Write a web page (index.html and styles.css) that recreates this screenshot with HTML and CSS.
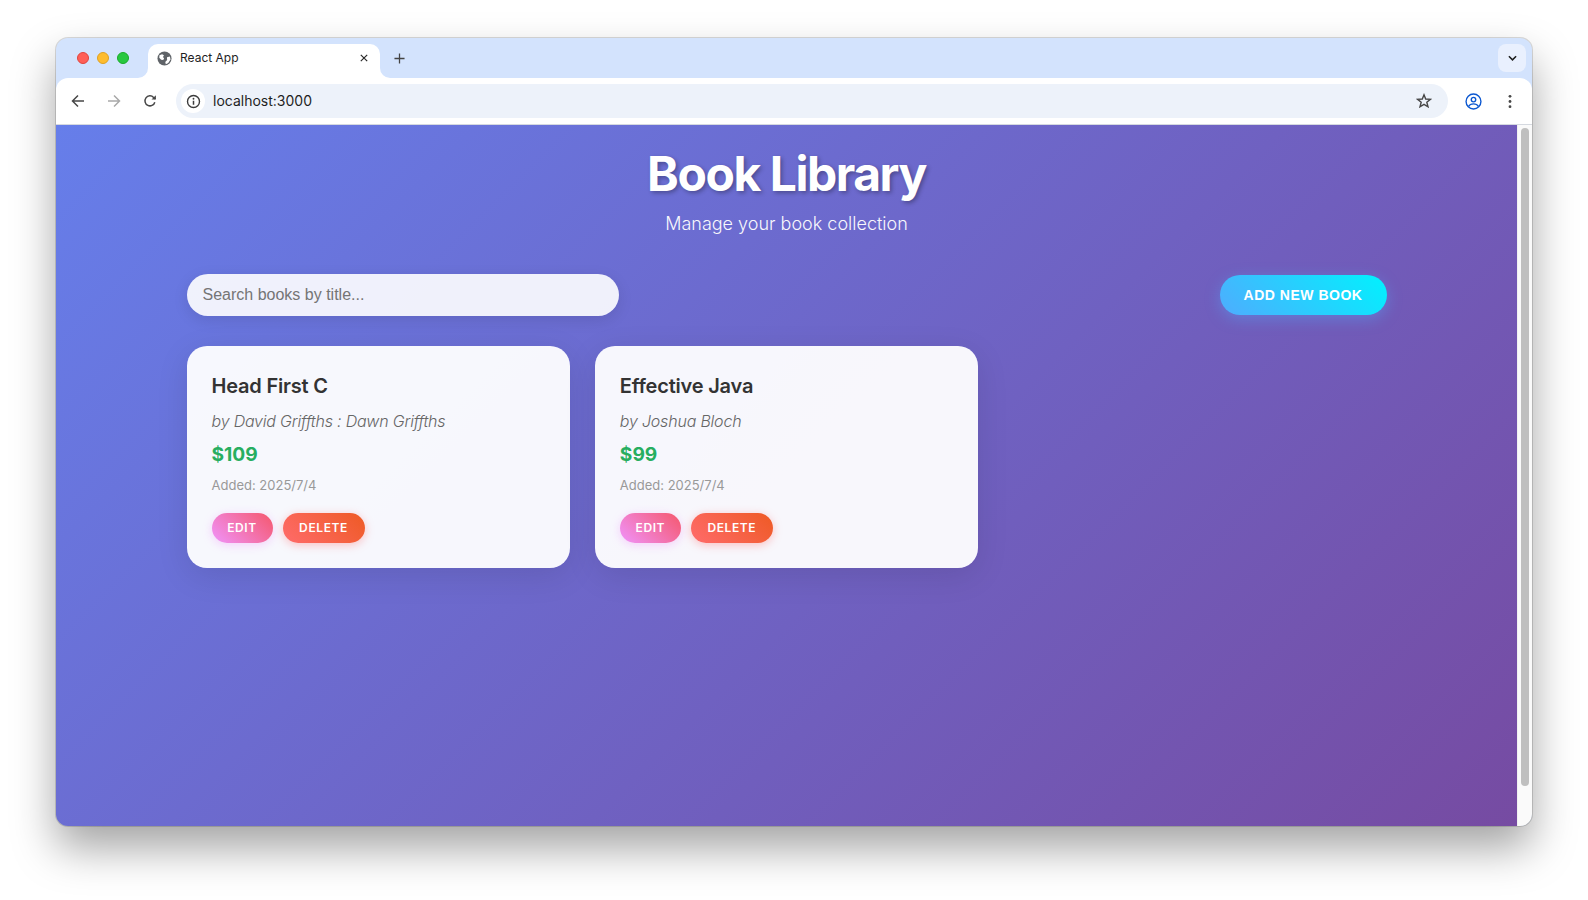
FILE: index.html
```html
<!DOCTYPE html>
<html lang="en">

<head>
    <meta charset="UTF-8">
    <meta name="viewport" content="width=device-width, initial-scale=1.0">
    <title>React App</title>
    <link rel="stylesheet" href="styles.css">
</head>

<body>

    <div class="window">

        <div class="tab-strip">
            <div class="lights">
                <span class="light red"></span>
                <span class="light yellow"></span>
                <span class="light green"></span>
            </div>
            <div class="tab">
                <svg class="favicon" viewBox="0 0 16 16">
                    <circle cx="8" cy="8" r="7.5" fill="#5f6368"/>
                    <path d="M2.6 4.6 5.4 3.4 7.4 4.6 6.4 6.4 7.6 8 6.6 9.6 4.4 9.2 2.4 7.2Z" fill="#fff"/>
                    <path d="M10.6 6.6 13.8 5.8 14.4 9 12 12.8 9.4 14 8.8 11.6 10.8 9.6Z" fill="#fff"/>
                </svg>
                <span class="tab-title">React App</span>
                <svg class="tab-close" viewBox="0 0 10 10">
                    <path d="M1 1 9 9M9 1 1 9" stroke="#2b2b2b" stroke-width="1.5" fill="none"/>
                </svg>
            </div>
            <svg class="new-tab" viewBox="0 0 12 12">
                <path d="M6 .5V11.5M.5 6H11.5" stroke="#444" stroke-width="1.4" fill="none"/>
            </svg>
            <div class="tab-menu">
                <svg viewBox="0 0 10 6" class="chevron">
                    <path d="M1 1 5 5 9 1" stroke="#1f1f1f" stroke-width="1.7" fill="none"/>
                </svg>
            </div>
        </div>

        <div class="toolbar">
            <svg class="nav-icon" viewBox="0 0 14 14">
                <path d="M13 7H2M7 1.5 1.5 7 7 12.5" stroke="#474747" stroke-width="1.5" fill="none"/>
            </svg>
            <svg class="nav-icon" viewBox="0 0 14 14">
                <path d="M1 7H12M7 1.5 12.5 7 7 12.5" stroke="#a9a9a9" stroke-width="1.5" fill="none"/>
            </svg>
            <svg class="nav-icon" viewBox="0 0 14 14">
                <path d="M11.8 8.2A5 5 0 1 1 10.6 3.4L12.4 5" stroke="#474747" stroke-width="1.5" fill="none"/>
                <path d="M12.9 1.2V5.6H8.5Z" fill="#474747"/>
            </svg>
            <div class="omnibox">
                <span class="site-info">
                    <svg viewBox="0 0 14 14">
                        <circle cx="7" cy="7" r="5.6" stroke="#3c3c3c" stroke-width="1.3" fill="none"/>
                        <path d="M7 6.2V10" stroke="#3c3c3c" stroke-width="1.4"/>
                        <circle cx="7" cy="4.4" r=".85" fill="#3c3c3c"/>
                    </svg>
                </span>
                <span class="url">localhost:3000</span>
                <svg class="star" viewBox="0 0 16 16">
                    <path d="M8 1.8 9.7 6 14.4 6.3 10.8 9.2 12 13.8 8 11.3 4 13.8 5.2 9.2 1.6 6.3 6.3 6Z" stroke="#474747" stroke-width="1.4" fill="none"/>
                </svg>
            </div>
            <svg class="profile" viewBox="0 0 16 16">
                <circle cx="8" cy="8" r="7" stroke="#0b57d0" stroke-width="1.3" fill="none"/>
                <circle cx="8" cy="6.2" r="2.1" stroke="#0b57d0" stroke-width="1.3" fill="none"/>
                <path d="M3.4 12.6C4.4 10.6 6 10.2 8 10.2S11.6 10.6 12.6 12.6" stroke="#0b57d0" stroke-width="1.3" fill="none"/>
            </svg>
            <svg class="dots" viewBox="0 0 4 16">
                <circle cx="2" cy="2.5" r="1.5" fill="#474747"/>
                <circle cx="2" cy="8" r="1.5" fill="#474747"/>
                <circle cx="2" cy="13.5" r="1.5" fill="#474747"/>
            </svg>
        </div>

        <div class="viewport">
            <main class="page">
                <div class="container">
                    <header class="page-header">
                        <h1>Book Library</h1>
                        <p>Manage your book collection</p>
                    </header>

                    <div class="controls">
                        <input class="search" type="text" placeholder="Search books by title...">
                        <button class="add-button">ADD NEW BOOK</button>
                    </div>

                    <div class="book-grid">
                        <div class="book-card">
                            <h3>Head First C</h3>
                            <p class="author">by David Griffths : Dawn Griffths</p>
                            <p class="price">$109</p>
                            <p class="added">Added: 2025/7/4</p>
                            <div class="card-actions">
                                <button class="edit-button">EDIT</button>
                                <button class="delete-button">DELETE</button>
                            </div>
                        </div>
                        <div class="book-card">
                            <h3>Effective Java</h3>
                            <p class="author">by Joshua Bloch</p>
                            <p class="price">$99</p>
                            <p class="added">Added: 2025/7/4</p>
                            <div class="card-actions">
                                <button class="edit-button">EDIT</button>
                                <button class="delete-button">DELETE</button>
                            </div>
                        </div>
                    </div>
                </div>
            </main>
            <div class="scrollbar">
                <div class="scroll-thumb"></div>
            </div>
        </div>

    </div>

</body>

</html>
```

FILE: styles.css
```css
html, body {
    margin: 0;
    height: 100%;
    background-color: #fff;
    overflow: hidden;
}

body {
    padding: 38px 56px 0;
    box-sizing: border-box;
    font-family: 'Inter', sans-serif;
}

.window {
    width: 1476px;
    height: 788px;
    display: flex;
    flex-direction: column;
    border-radius: 12px;
    overflow: hidden;
    background-color: #d3e3fd;
}

/* shadow goes on its own box so the overflow clip does not eat it */
body::before {
    content: '';
    position: absolute;
    left: 56px;
    top: 38px;
    width: 1476px;
    height: 788px;
    border-radius: 12px;
    box-shadow: 0 0 0 1px rgba(0, 0, 0, 0.14), 0 22px 44px rgba(0, 0, 0, 0.36);
}

.tab-strip {
    position: relative;
    height: 40px;
    display: flex;
    align-items: flex-end;
    flex-shrink: 0;
    overflow: hidden;
}

.lights {
    display: flex;
    gap: 8px;
    align-self: center;
    padding-left: 21px;
    width: 71px;
}

.light {
    width: 12px;
    height: 12px;
    border-radius: 50%;
    box-sizing: border-box;
}

.red { background-color: #ff5f57; border: 1px solid #e0443e; }
.yellow { background-color: #febc2e; border: 1px solid #dea123; }
.green { background-color: #28c840; border: 1px solid #1aab29; }

.tab {
    position: relative;
    width: 232px;
    height: 34px;
    background-color: #fff;
    border-radius: 10px 10px 0 0;
    display: flex;
    align-items: center;
    box-sizing: border-box;
    padding: 0 12px 6px 9px;
}

.tab::before,
.tab::after {
    content: '';
    position: absolute;
    bottom: 0;
    width: 10px;
    height: 10px;
    background-color: #d3e3fd;
}

.tab::before {
    left: -10px;
    border-bottom-right-radius: 10px;
    box-shadow: 4px 4px 0 4px #fff;
}

.tab::after {
    right: -10px;
    border-bottom-left-radius: 10px;
    box-shadow: -4px 4px 0 4px #fff;
}

.favicon {
    width: 15px;
    height: 15px;
    flex-shrink: 0;
}

.tab-title {
    margin-left: 8px;
    font-size: 12px;
    line-height: 14px;
    margin-bottom: 1px;
    color: #1f1f1f;
    flex: 1;
}

.tab-close {
    width: 8px;
    height: 8px;
}

.new-tab {
    width: 11px;
    height: 11px;
    margin: 0 0 14px 14px;
}

.tab-menu {
    margin-left: auto;
    margin-right: 6px;
    align-self: center;
    width: 28px;
    height: 28px;
    border-radius: 8px;
    background-color: #e9f0fe;
    display: flex;
    align-items: center;
    justify-content: center;
}

.chevron {
    width: 9px;
    height: 6px;
}

.toolbar {
    height: 46px;
    flex-shrink: 0;
    background-color: #fff;
    border-radius: 12px 12px 0 0;
    border-bottom: 1px solid #d5d9e0;
    display: flex;
    align-items: center;
    padding-left: 15px;
    box-sizing: content-box;
}

.nav-icon {
    width: 14px;
    height: 14px;
    margin-right: 22px;
}

.omnibox {
    width: 1272px;
    height: 34px;
    margin-left: -3px;
    border-radius: 17px;
    background-color: #edf2fa;
    display: flex;
    align-items: center;
    padding: 0 16px 0 5px;
    box-sizing: border-box;
}

.site-info {
    width: 24px;
    height: 24px;
    border-radius: 50%;
    background-color: #fff;
    display: flex;
    align-items: center;
    justify-content: center;
}

.site-info svg {
    width: 15px;
    height: 15px;
}

.url {
    flex: 1;
    margin-left: 8px;
    font-size: 14px;
    line-height: 16px;
    margin-bottom: 1px;
    color: #1f1f1f;
}

.star {
    width: 16px;
    height: 16px;
}

.profile {
    width: 17px;
    height: 17px;
    margin-left: 17px;
}

.dots {
    width: 4px;
    height: 15px;
    margin-left: 26px;
}

.viewport {
    flex: 1;
    display: flex;
    min-height: 0;
}

.page {
    flex: 1;
    background: linear-gradient(135deg, #667eea 0%, #764ba2 100%);
}

.container {
    width: 1200px;
    margin: 0 auto;
}

.page-header {
    text-align: center;
    padding-top: 20px;
    margin-bottom: 39px;
    color: #fff;
}

.page-header h1 {
    margin: 0 0 10px;
    font-size: 48px;
    line-height: 58px;
    font-weight: 700;
    letter-spacing: -1.45px;
    text-shadow: 2px 2px 4px rgba(0, 0, 0, 0.3);
}

.page-header p {
    margin: 0;
    font-size: 18px;
    line-height: 22px;
    font-weight: 300;
    opacity: 0.95;
}

.controls {
    display: flex;
    justify-content: space-between;
    align-items: center;
    margin-bottom: 30px;
}

.search {
    width: 432px;
    height: 42px;
    box-sizing: border-box;
    padding: 0 16px;
    border: none;
    outline: none;
    border-radius: 25px;
    background-color: rgba(255, 255, 255, 0.9);
    font-family: 'Liberation Sans', sans-serif;
    font-size: 16px;
    box-shadow: 0 4px 15px rgba(0, 0, 0, 0.1);
}

.search::placeholder {
    color: #757575;
}

.add-button {
    width: 167px;
    height: 40px;
    border: none;
    border-radius: 25px;
    background: linear-gradient(45deg, #4facfe 0%, #00f2fe 100%);
    color: #fff;
    font-family: 'Liberation Sans', sans-serif;
    font-size: 14px;
    font-weight: 700;
    letter-spacing: 0.5px;
    box-shadow: 0 4px 15px rgba(79, 172, 254, 0.4);
}

.book-grid {
    display: grid;
    grid-template-columns: repeat(3, 1fr);
    gap: 25px;
}

.book-card {
    background-color: rgba(255, 255, 255, 0.95);
    border-radius: 20px;
    padding: 28px 25px 25px;
    box-shadow: 0 8px 32px rgba(0, 0, 0, 0.1);
}

.book-card h3 {
    margin: 0 0 12px;
    font-size: 20px;
    line-height: 24px;
    font-weight: 600;
    letter-spacing: -0.2px;
    color: #333;
}

.author {
    margin: 0 0 11px;
    font-size: 16px;
    line-height: 22px;
    font-style: italic;
    font-weight: 300;
    letter-spacing: -0.2px;
    color: #666;
}

.price {
    margin: 0 0 11px;
    font-size: 19.2px;
    line-height: 23px;
    font-weight: 700;
    color: #27ae60;
}

.added {
    margin: 0 0 20px;
    font-size: 13px;
    line-height: 16px;
    color: #999;
}

.card-actions {
    display: flex;
    gap: 10px;
}

.card-actions button {
    height: 30px;
    padding: 0 0 2px;
    border: none;
    border-radius: 20px;
    color: #fff;
    font-family: 'Inter', sans-serif;
    font-size: 12px;
    font-weight: 600;
    letter-spacing: 0.6px;
}

.edit-button {
    width: 61px;
    background: linear-gradient(45deg, #f093fb 0%, #f5576c 100%);
    box-shadow: 0 2px 10px rgba(240, 147, 251, 0.4);
}

.delete-button {
    width: 82px;
    background: linear-gradient(45deg, #ff6b6b 0%, #ee5a24 100%);
    box-shadow: 0 2px 10px rgba(255, 107, 107, 0.4);
}

.scrollbar {
    width: 15px;
    flex-shrink: 0;
    background-color: #fafafa;
    border-left: 1px solid #f0f0f0;
    box-sizing: border-box;
    padding: 3px 3px 0 3px;
}

.scroll-thumb {
    height: 658px;
    border-radius: 4px;
    background-color: #bfbfbf;
}
```
